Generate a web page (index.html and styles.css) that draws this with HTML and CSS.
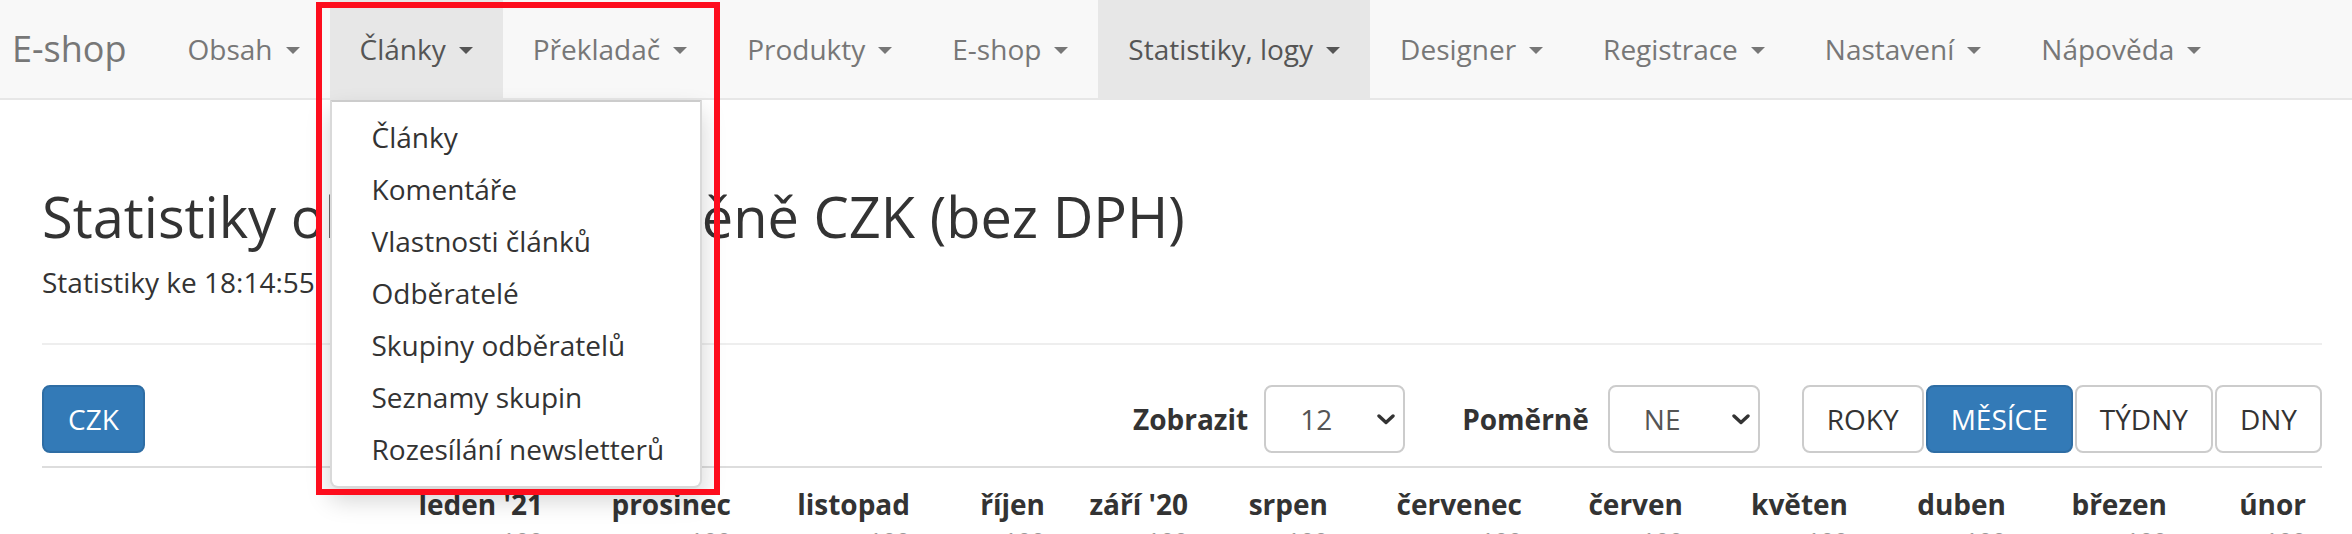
FILE: index.html
```html
<!DOCTYPE html>
<html lang="cs">
<head>
<meta charset="utf-8">
<title>E-shop – Statistiky</title>
<link rel="stylesheet" href="styles.css">
</head>
<body>
<nav class="navbar">
  <a class="brand">E-shop</a>
  <ul class="nav">
    <li class="nav-item"><a class="nav-link">Obsah<span class="caret"></span></a></li>
    <li class="nav-item open"><a class="nav-link">Články<span class="caret"></span></a>
      <ul class="dropdown">
        <li><a>Články</a></li>
        <li><a>Komentáře</a></li>
        <li><a>Vlastnosti článků</a></li>
        <li><a>Odběratelé</a></li>
        <li><a>Skupiny odběratelů</a></li>
        <li><a>Seznamy skupin</a></li>
        <li><a>Rozesílání newsletterů</a></li>
      </ul>
    </li>
    <li class="nav-item"><a class="nav-link">Překladač<span class="caret"></span></a></li>
    <li class="nav-item"><a class="nav-link">Produkty<span class="caret"></span></a></li>
    <li class="nav-item"><a class="nav-link">E-shop<span class="caret"></span></a></li>
    <li class="nav-item active"><a class="nav-link">Statistiky, logy<span class="caret"></span></a></li>
    <li class="nav-item"><a class="nav-link">Designer<span class="caret"></span></a></li>
    <li class="nav-item"><a class="nav-link">Registrace<span class="caret"></span></a></li>
    <li class="nav-item"><a class="nav-link">Nastavení<span class="caret"></span></a></li>
    <li class="nav-item"><a class="nav-link">Nápověda<span class="caret"></span></a></li>
  </ul>
</nav>

<main class="content">
  <h1 class="title">Statistiky objednávek v měně CZK (bez DPH)</h1>
  <p class="subtitle">Statistiky ke 18:14:55</p>
  <hr class="rule">
  <div class="toolbar">
    <button class="btn btn-primary">CZK</button>
    <div class="controls">
      <label class="ctl-label">Zobrazit</label>
      <div class="select sel-count"><span>12</span><svg class="chev" width="18" height="11" viewBox="0 0 18 11"><path d="M2 2 L9 8.5 L16 2" fill="none" stroke="#333" stroke-width="3.4" stroke-linecap="round" stroke-linejoin="round"/></svg></div>
      <label class="ctl-label ctl-gap">Poměrně</label>
      <div class="select sel-ratio"><span>NE</span><svg class="chev" width="18" height="11" viewBox="0 0 18 11"><path d="M2 2 L9 8.5 L16 2" fill="none" stroke="#333" stroke-width="3.4" stroke-linecap="round" stroke-linejoin="round"/></svg></div>
      <div class="btn-row">
        <button class="btn">ROKY</button>
        <button class="btn btn-primary">MĚSÍCE</button>
        <button class="btn">TÝDNY</button>
        <button class="btn">DNY</button>
      </div>
    </div>
  </div>
  <div class="stats-head">
    <div class="th"></div>
    <div class="th">leden '21<span class="sub">100</span></div>
    <div class="th">prosinec<span class="sub">100</span></div>
    <div class="th">listopad<span class="sub">100</span></div>
    <div class="th">říjen<span class="sub">100</span></div>
    <div class="th">září '20<span class="sub">100</span></div>
    <div class="th">srpen<span class="sub">100</span></div>
    <div class="th">červenec<span class="sub">100</span></div>
    <div class="th">červen<span class="sub">100</span></div>
    <div class="th">květen<span class="sub">100</span></div>
    <div class="th">duben<span class="sub">100</span></div>
    <div class="th">březen<span class="sub">100</span></div>
    <div class="th">únor<span class="sub">100</span></div>
  </div>
</main>

<div class="highlight"></div>
</body>
</html>
```
FILE: styles.css
```css
* { box-sizing: border-box; }
html, body { margin: 0; padding: 0; }
body {
  font-family: "Open Sans", "Noto Sans", sans-serif;
  font-size: 28px;
  line-height: 40px;
  color: #333;
  background: #fff;
  width: 2352px;
  height: 534px;
  overflow: hidden;
  position: relative;
}

/* navbar */
.navbar {
  display: flex;
  align-items: stretch;
  height: 100px;
  background: #f8f8f8;
  border-bottom: 2px solid #e7e7e7;
}
.brand {
  font-size: 36px;
  line-height: 40px;
  color: #777;
  padding: 29px 31px 29px 12px;
}
.nav {
  display: flex;
  margin: 0;
  padding: 0;
  list-style: none;
}
.nav-item { position: relative; }
.nav-link {
  display: block;
  height: 98px;
  padding: 29px 30px;
  color: #777;
  white-space: nowrap;
}
.nav-item.open .nav-link,
.nav-item.active .nav-link {
  background: #e7e7e7;
  color: #555;
}
.caret {
  display: inline-block;
  width: 0;
  height: 0;
  margin-left: 13px;
  vertical-align: middle;
  border-top: 7px solid;
  border-left: 7px solid transparent;
  border-right: 7px solid transparent;
  position: relative;
  top: -2px;
}

/* dropdown */
.dropdown {
  position: absolute;
  top: 100px;
  left: 0;
  width: 372px;
  margin: 0;
  padding: 9px 0 11px;
  list-style: none;
  background: #fff;
  border: 2px solid rgba(0,0,0,.15);
  border-top-color: #ccc;
  border-radius: 0 0 8px 8px;
  box-shadow: 0 12px 24px rgba(0,0,0,.175);
  z-index: 10;
}
.dropdown a {
  display: block;
  padding: 6px 40px;
  line-height: 40px;
  color: #333;
  white-space: nowrap;
}

/* content */
.content {
  padding: 0 30px 0 42px;
}
.title {
  margin: 82px 0 0;
  font-size: 56px;
  line-height: 68px;
  font-weight: 400;
  color: #333;
  white-space: nowrap;
}
.subtitle {
  margin: 12px 0 0;
}
.rule {
  margin: 41px 0 0;
  border: 0;
  border-top: 2px solid #eee;
}
.toolbar {
  margin-top: 40px;
  display: flex;
  justify-content: space-between;
  align-items: center;
}
.btn {
  font-family: inherit;
  font-size: 28px;
  line-height: 40px;
  height: 68px;
  padding: 12px 23px;
  border: 2px solid #ccc;
  border-radius: 8px;
  background: #fff;
  color: #333;
}
.btn-primary {
  background: #337ab7;
  border-color: #2e6da4;
  color: #fff;
}
.toolbar > .btn-primary { padding: 12px 24px; }
.controls {
  display: flex;
  align-items: center;
}
.ctl-label {
  font-weight: 700;
  margin-right: 16px;
}
.ctl-gap { margin-left: 57px; margin-right: 19px; }
.select {
  display: flex;
  align-items: center;
  justify-content: space-between;
  height: 68px;
  border: 2px solid #ccc;
  border-radius: 8px;
  background: #fff;
  color: #555;
  padding: 0 8px 0 34px;
}
.sel-count { width: 141px; }
.sel-ratio { width: 152px; }
.chev { display: block; }
.btn-row {
  display: flex;
  gap: 2px;
  margin-left: 42px;
}

/* table header */
.stats-head {
  margin-top: 13px;
  border-top: 2px solid #ddd;
  display: grid;
  grid-template-columns: 358px 159px 188px 179px 135px 143px 140px 194px 161px 165px 158px 161px 139px;
}
.th {
  font-weight: 700;
  text-align: right;
  padding: 16px 16px 0 0;
  white-space: nowrap;
}
.sub {
  display: block;
  font-weight: 400;
  font-size: 24px;
  line-height: 34px;
  color: #999;
}
.th:first-child .sub { display: none; }

/* annotation box */
.highlight {
  position: absolute;
  left: 316px;
  top: 2px;
  width: 404px;
  height: 493px;
  border: 6px solid #fd0d1d;
  z-index: 20;
  pointer-events: none;
}
```
